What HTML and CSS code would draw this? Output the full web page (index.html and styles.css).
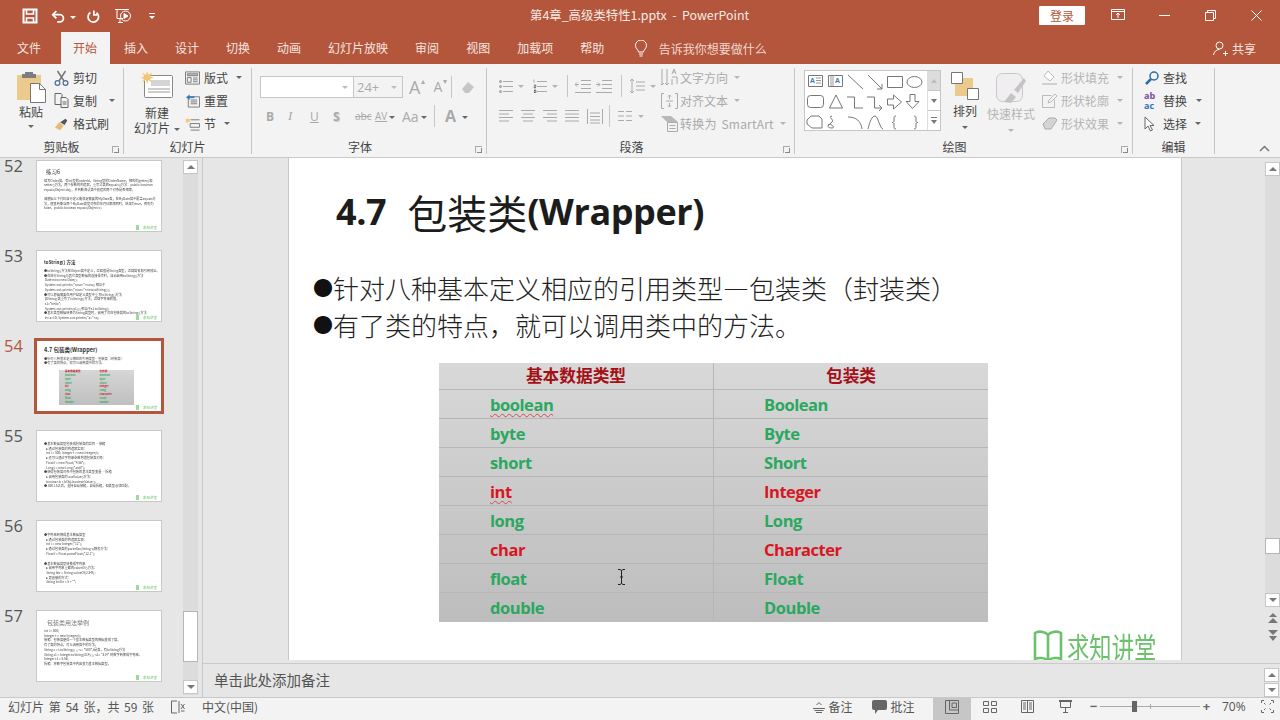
FILE: index.html
```html
<!DOCTYPE html>
<html lang="zh-CN">
<head>
<meta charset="utf-8">
<title>PowerPoint</title>
<link rel="stylesheet" href="styles.css">
</head>
<body>
<div class="app">
  <header class="titlebar">
    <div class="qat">
      <svg width="16" height="16" viewBox="0 0 16 16" fill="none" stroke="#fff" stroke-width="2"><path d="M1.500 1.500h13v13h-13z"/><path d="M4.500 2v4h7V2M4.500 14v-4h7v4" stroke-width="1.600"/></svg>
      <svg class="q-undo" width="16" height="15" viewBox="0 0 18 16" fill="none" stroke="#fff" stroke-width="2"><path d="M2 6h8a4 4 0 0 1 0 8H7"/><path d="M6 2L2 6l4 4"/></svg>
      <span class="caret white"></span>
      <svg class="q-redo" width="14" height="15" viewBox="0 0 16 16" fill="none" stroke="#fff" stroke-width="2"><path d="M5 3.400a6 6 0 1 0 7 .2"/><path d="M9 1v5H13"/></svg>
      <svg class="q-show" width="18" height="18" viewBox="0 0 18 18" fill="none" stroke="#fff" stroke-width="1"><path d="M1 2.500h14M3 2.500v9h6M6 11.500v4M4 15.500h5"/><circle cx="11.500" cy="9" r="5"/><path d="M10 6.500l4 2.500-4 2.500z" fill="#fff"/></svg>
      <span class="qat-more"></span>
    </div>
    <div class="doc-title">第4章_高级类特性1.pptx&nbsp; -&nbsp; PowerPoint</div>
    <div class="win">
      <button class="login">登录</button>
      <svg class="wi-ribbon" width="14" height="12" viewBox="0 0 14 12" fill="none" stroke="#fff"><path d="M.5.5h13v10H.5zM.5 2.500h13M7 9V4.500M5 6l2-2 2 2"/></svg>
      <svg class="wi-min" width="11" height="11" viewBox="0 0 11 11" stroke="#fff"><path d="M0 5.500h11"/></svg>
      <svg class="wi-max" width="11" height="11" viewBox="0 0 11 11" fill="none" stroke="#fff"><path d="M.5 2.500h8v8h-8zM2.500 2.500v-2h8v8h-2"/></svg>
      <svg class="wi-close" width="11" height="11" viewBox="0 0 11 11" stroke="#fff"><path d="M.5.5l10 10M10.500.5l-10 10"/></svg>
    </div>
  </header>

  <nav class="tabs">
    <span class="tab first">文件</span>
    <span class="tab active">开始</span>
    <span class="tab">插入</span>
    <span class="tab">设计</span>
    <span class="tab">切换</span>
    <span class="tab">动画</span>
    <span class="tab">幻灯片放映</span>
    <span class="tab">审阅</span>
    <span class="tab">视图</span>
    <span class="tab">加载项</span>
    <span class="tab">帮助</span>
    <span class="tell">
      <svg width="14" height="17" viewBox="0 0 14 17" fill="none" stroke="#fff"><path d="M4.500 12c0-2-3-3.500-3-6.500a5.500 5.500 0 0 1 11 0c0 3-3 4.500-3 6.500zM5 14h4M5.500 16h3"/></svg>
      <span>告诉我你想要做什么</span>
    </span>
    <span class="share">
      <svg width="15" height="15" viewBox="0 0 15 15" fill="none" stroke="#fff"><circle cx="6.500" cy="4.500" r="3.500"/><path d="M.5 14c.5-3.500 3-5.500 6-5.500M10 12.500h5M12.500 10v5"/></svg>
      <span>共享</span>
    </span>
  </nav>

  <section class="ribbon">
    <div class="group g-clip">
      <div class="group-body">
        <div class="big paste">
          <svg width="29" height="31" viewBox="0 0 29 31"><path d="M0 3h24v25H0z" fill="#ecca8c"/><path d="M8 0h8v2h3v4H5V2h3z" fill="#7d7d7d"/><path d="M13.500 11.500h9l6 6v13h-15z" fill="#fff" stroke="#777"/><path d="M22.500 11.500v6h6" fill="none" stroke="#777"/></svg>
          <span>粘贴</span>
          <span class="caret"></span>
        </div>
        <div class="col small-col">
          <div class="item"><svg width="14" height="16" viewBox="0 0 14 16" fill="none" stroke="#4a6f9c" stroke-width="1.200"><circle cx="3" cy="13" r="2.400"/><circle cx="11" cy="13" r="2.400"/><path d="M4.500 11L11 1M9.500 11L3 1" stroke="#777" stroke-width="1.500"/></svg><span>剪切</span></div>
          <div class="item"><svg width="14" height="15" viewBox="0 0 14 15" fill="none" stroke="#666"><path d="M.5.5h6l1 1v10h-7z"/><path d="M6.500 4.500h5l2 2v8h-7z" fill="#f3f3f3"/><path d="M8 9h4M8 11h4"/></svg><span>复制</span><span class="caret ml8"></span></div>
          <div class="item"><svg width="17" height="14" viewBox="0 0 17 14"><path d="M1 11l5-6 5 4-4 5z" fill="#e3bb76"/><path d="M7 5l6-4 2 2-3 5z" fill="#555"/></svg><span>格式刷</span></div>
        </div>
      </div>
      <div class="group-label">剪贴板</div>
      <span class="launcher"></span>
    </div>

    <div class="group g-slides">
      <div class="group-body">
        <div class="big newslide">
          <svg width="32" height="27" viewBox="0 0 32 27"><rect x="3.500" y="4.500" width="28" height="22" rx="1" fill="#fff" stroke="#888"/><path d="M10 9h19v6H10z" fill="#d4d4d4"/><path d="M7 18h22M7 21h22" stroke="#999"/><path d="M6 0l1.500 4L11 1.500 9 5.500l4 1-4 1.500 2 3.500L7.500 9 6 13 5 9l-4 2.500L3 8 0 6.500l3.500-1L1 1.500 5 4z" fill="#f2c674"/></svg>
          <span class="mt5">新建</span>
          <span class="line2">幻灯片<i class="caret ml4"></i></span>
        </div>
        <div class="col small-col s2">
          <div class="item"><svg width="16" height="14" viewBox="0 0 16 14" fill="none" stroke="#777"><path d="M.5.5h15v13H.5z"/><path d="M2.500 2.500h11v2h-11z" fill="#ccc"/><path d="M2.500 6.500h4v5h-4zM8.500 7h5M8.500 9h5M8.500 11h5"/></svg><span>版式</span><span class="caret ml4"></span></div>
          <div class="item"><svg width="16" height="15" viewBox="0 0 16 15" fill="none" stroke="#777"><path d="M3.500 3.500h12v11h-12z"/><path d="M6 7h7M6 9h7M6 11h7"/><path d="M1 4l4-3v6z" fill="#3d7fb8" stroke="none"/><path d="M4 4h6" stroke="#3d7fb8" stroke-width="2"/></svg><span>重置</span></div>
          <div class="item"><svg width="16" height="14" viewBox="0 0 16 14" fill="none" stroke="#777"><path d="M6 2.500h9.500M6 13.500h9.500M5.500 6.500h10v4h-10z"/><path d="M3 0l.7 2L6 1.500 4.500 3 6 5l-2.300-.5L3 7l-.7-2.500L0 5l1.500-2L0 1.500 2.300 2z" fill="#f2c674" stroke="none"/></svg><span>节</span><span class="caret ml4"></span></div>
        </div>
      </div>
      <div class="group-label">幻灯片</div>
    </div>

    <div class="group g-font dim">
      <div class="group-body column">
        <div class="row font-row1">
          <span class="fbox name"><i class="caret"></i></span>
          <span class="fbox size">24+<i class="caret"></i></span>
          <span class="f-a big-a">A<sup>▴</sup></span>
          <span class="f-a small-a">A<sup>▾</sup></span>
          <span class="vsep"></span>
          <svg class="eraser" width="14" height="14" viewBox="0 0 14 14"><path d="M1 9l6-7 6 5-5 6H4z" fill="#c6c6c6"/></svg>
        </div>
        <div class="row font-row2">
          <b>B</b><i class="it">I</i><u>U</u><b class="shadow">S</b><s>abc</s>
          <span class="av">AV<i class="caret ml2"></i></span>
          <span class="aa">Aa<i class="caret ml2"></i></span>
          <span class="vsep"></span>
          <b class="colora">A<i class="caret ml6"></i></b>
        </div>
      </div>
      <div class="group-label off">字体</div>
      <span class="launcher"></span>
    </div>

    <div class="group g-para dim">
      <div class="group-body">
        <div class="col para-left">
          <div class="row para-row1">
            <svg width="14" height="14" viewBox="0 0 14 14" stroke="#aaa"><path d="M4 2.500h10M4 7.500h10M4 12.500h10"/><circle cx="1.500" cy="2.500" r="1.500" fill="#aaa" stroke="none"/><circle cx="1.500" cy="7.500" r="1.500" fill="#aaa" stroke="none"/><circle cx="1.500" cy="12.500" r="1.500" fill="#aaa" stroke="none"/></svg><i class="caret lt"></i>
            <svg width="14" height="14" viewBox="0 0 14 14" stroke="#aaa"><path d="M4 2.500h10M4 7.500h10M4 12.500h10M1 0.500v3M1 6h2v1.500H1V9h2M1 11h2v3H1M1 12.500h2"/></svg><i class="caret lt"></i>
            <span class="vsep"></span>
            <svg class="ind" width="16" height="13" viewBox="0 0 16 13" stroke="#aaa" fill="none"><path d="M6 .5h10M6 4.500h10M6 8.500h10M0 12.500h16M4 4.500H0M2 2.500l-2 2 2 2"/></svg>
            <svg width="16" height="13" viewBox="0 0 16 13" stroke="#aaa" fill="none"><path d="M6 .5h10M6 4.500h10M6 8.500h10M0 12.500h16M0 4.500h4M2 2.500l2 2-2 2"/></svg>
            <span class="vsep sep2"></span>
            <svg class="ind" width="16" height="16" viewBox="0 0 16 16" stroke="#aaa" fill="none"><path d="M3 1v14M1 3l2-2 2 2M1 13l2 2 2-2M7 4h9M7 8h9M7 12h9"/></svg><i class="caret lt"></i>
          </div>
          <div class="row para-row2">
            <svg width="14" height="12" viewBox="0 0 14 12" stroke="#aaa"><path d="M0 .5h14M0 4h10M0 7.500h14M0 11h10"/></svg>
            <svg width="14" height="12" viewBox="0 0 14 12" stroke="#aaa"><path d="M0 .5h14M2 4h10M0 7.500h14M2 11h10"/></svg>
            <svg width="14" height="12" viewBox="0 0 14 12" stroke="#aaa"><path d="M0 .5h14M4 4h10M0 7.500h14M4 11h10"/></svg>
            <svg width="14" height="12" viewBox="0 0 14 12" stroke="#aaa"><path d="M0 .5h14M0 4h14M0 7.500h14M0 11h14"/></svg>
            <svg width="16" height="15" viewBox="0 0 16 15" stroke="#aaa" fill="none"><path d="M.5 0v15M15.500 0v15M3 4h10M3 7.500h10M3 11h10M3 14h10"/></svg>
            <span class="vsep"></span>
            <svg width="14" height="10" viewBox="0 0 14 10" stroke="#aaa"><path d="M0 .5h6M8 .5h6M0 5h6M8 5h6M0 9.500h6M8 9.500h6"/></svg><i class="caret lt"></i>
          </div>
        </div>
        <div class="col para-right">
          <div class="item"><svg width="17" height="17" viewBox="0 0 17 17" stroke="#aaa" fill="none"><path d="M1 0v16M-1 14l2 2 2-2M6 0v16M4 14l2 2 2-2M11 5l2-5 2 5M12 3h2M11 8h5v7M11 10v6"/></svg><span>文字方向</span><i class="caret lt ml4"></i></div>
          <div class="item"><svg width="17" height="16" viewBox="0 0 17 16" stroke="#aaa" fill="none"><path d="M3 .5H.5v15H3M14 .5h2.500v15H14M5 8h7M8.500 2v4M7 3.500l1.500-1.500L10 3.500M8.500 14v-4M7 12.500L8.500 14l1.500-1.500"/></svg><span>对齐文本</span><i class="caret lt ml4"></i></div>
          <div class="item"><svg width="17" height="16" viewBox="0 0 17 16" fill="none"><path d="M0 0h10l7 6H6z" fill="#b8b8b8"/><path d="M6.500 6.500h10v9h-10zM8.500 9.500h6M8.500 12.500h6" stroke="#aaa"/></svg><span class="smartart">转换为 SmartArt</span><i class="caret lt ml4"></i></div>
        </div>
      </div>
      <div class="group-label off">段落</div>
      <span class="launcher"></span>
    </div>

    <div class="group g-draw">
      <div class="group-body">
        <div class="gallery">
          <svg width="122" height="60" viewBox="0 0 122 60" fill="none" stroke="#777">
            <path d="M3.500 4.500h14v11h-14zM23.500 4.500h14v11h-14z"/><path d="M11 7h5M11 9.500h5M11 12h5M26 5v10M28 5v10" stroke="#999"/>
            <text class="ga" x="5" y="12">A</text><text class="ga" x="30" y="12">A</text>
            <path d="M43 4l15 14M63 4l14 14M77 13v5h-5"/>
            <path d="M82.500 5.500h15v11h-15z"/><ellipse cx="109.500" cy="11" rx="7.500" ry="5.500"/>
            <rect x="2.500" y="24.500" width="16" height="12" rx="3"/><path d="M31 24l-6.500 13h13zM42 26h7.500v11H58M62 26h7.500v11H77M74 34l3 3-3 3M82.500 28h6v-4l8 7-8 7v-4h-6zM105 23.500h5v7h4l-6.500 7-6.500-7h4z"/>
            <path d="M6 45h8l3 3v9H7l-5-4v-4zM27 45c-5 1 4 4-1 7s-3 5 1 5-1-5-4-3M43 46c8 0 13 4 14 12M63 58c2-8 4-13 7-13s5 13 8 13"/>
            <path d="M91 45c-2 0-2 1-2 3v2c0 1-1 1.500-2 1.500 1 0 2 .5 2 1.500v2c0 2 0 3 2 3M109 45c2 0 2 1 2 3v2c0 1 1 1.500 2 1.500-1 0-2 .5-2 1.500v2c0 2 0 3-2 3"/>
          </svg>
          <div class="gal-scroll">
            <span class="gs top"><i class="up lt"></i></span>
            <span class="gs"><i class="down"></i></span>
            <span class="gs more"><i class="bar"></i><i class="down"></i></span>
          </div>
        </div>
        <div class="big arrange">
          <svg width="28" height="28" viewBox="0 0 28 28"><path d="M4 6h18v18H4z" fill="#ecca8c"/><path d="M.5.5h11v11H.5zM16.500 16.500h11v11h-11z" fill="#fff" stroke="#777"/></svg>
          <span class="mt3">排列</span>
          <span class="caret"></span>
        </div>
        <div class="big quick dim-t">
          <svg width="30" height="30" viewBox="0 0 30 30" fill="none"><rect x=".5" y=".5" width="26" height="28" rx="6" fill="#f1eef2" stroke="#c8c8c8"/><path d="M8 29l7-9 5 4-5 6zM18 17l10-12 2 3-8 12z" fill="#c4c4c4"/></svg>
          <span class="mt3">快速样式</span>
          <span class="caret lt"></span>
        </div>
        <div class="col shape-col dim-t">
          <div class="item"><svg width="15" height="15" viewBox="0 0 15 15"><path d="M6 1l6 6-4 4-6-5z" fill="#fff" stroke="#bbb"/><path d="M0 13h15v2H0z" fill="#d0d0d0"/></svg><span>形状填充</span><i class="caret lt ml4"></i></div>
          <div class="item"><svg width="15" height="15" viewBox="0 0 15 15" fill="none" stroke="#bbb"><path d="M.5 2.500h9M.5 2.500v12h12v-8M6 10l1-3 6-6 2 2-6 6z"/></svg><span>形状轮廓</span><i class="caret lt ml4"></i></div>
          <div class="item"><svg width="15" height="13" viewBox="0 0 15 13"><path d="M1 7l6-6h6l2 2-6 9H3z" fill="#d4d4d4" stroke="#aaa"/></svg><span>形状效果</span><i class="caret lt ml4"></i></div>
        </div>
      </div>
      <div class="group-label off">绘图</div>
      <span class="launcher"></span>
    </div>

    <div class="group g-edit">
      <div class="group-body">
        <div class="col edit-col">
          <div class="item"><svg class="find" width="14" height="14" viewBox="0 0 14 14" fill="none" stroke="#2d6da8"><circle cx="9" cy="5" r="4" stroke-width="1.500"/><path d="M6 8l-5 5" stroke-width="2.500"/></svg><span>查找</span></div>
          <div class="item rep"><span class="abac"><em>ab</em><em class="ac">ac</em></span><span>替换</span><span class="caret ml5"></span></div>
          <div class="item sel"><svg width="11" height="16" viewBox="0 0 11 16" fill="#fff" stroke="#666"><path d="M1 1v12l3-3 2.500 5 2-1-2.500-4.500h4z"/></svg><span>选择</span><span class="caret ml4"></span></div>
        </div>
      </div>
      <div class="group-label">编辑</div>
    </div>
    <svg class="collapse" width="11" height="7" viewBox="0 0 11 7" fill="none" stroke="#777" stroke-width="1.500"><path d="M1 6l4.500-4.500L10 6"/></svg>
  </section>

  <main class="workspace">
    <aside class="thumbs">
      <div class="thumb-list">
        <div class="thumb"><span class="num">52</span>
          <div class="card"><h4>练习6</h4><p>编写Order类，有int型的orderId，String型的OrderName，相应的getter()和setter()方法，两个参数的构造器，重写父类的equals()方法：public boolean equals(Object obj)，并判断测试类中创建的两个对象是否相等。</p><p class="gap">请根据以下代码自行定义能满足需要的MyDate类，在MyDate类中覆盖equals方法，使其判断当两个MyDate类型对象的年月日都相同时，结果为true，否则为false。public boolean equals(Object o)</p><span class="mini-logo">求知讲堂</span></div></div>
        <div class="thumb"><span class="num">53</span>
          <div class="card dense"><h4 class="small-h">toString() 方法</h4><p>●toString()方法在Object类中定义，返回值是String类型，返回类名和引用地址。</p><p>●在进行String与其它类型数据的连接操作时，自动调用toString()方法</p><p>&nbsp;Date now=new Date();</p><p>&nbsp;System.out.println("now="+now); 相当于</p><p>&nbsp;System.out.println("now="+now.toString());</p><p>●可以根据需要在用户自定义类型中重写toString()方法</p><p>&nbsp;如String 类重写了toString()方法，返回字符串的值。</p><p>&nbsp;s1="hello";</p><p>&nbsp;System.out.println(s1);//相当于s1.toString()</p><p>●基本类型数据转换为String类型时，调用了对应包装类的toString()方法</p><p>&nbsp;int a=10; System.out.println("a="+a);</p><span class="mini-logo">求知讲堂</span></div></div>
        <div class="thumb current"><span class="num">54</span>
          <div class="card"><h4 class="h54">4.7 包装类(Wrapper)</h4><p>●针对八种基本定义相应的引用类型—包装类（封装类）</p><p>●有了类的特点，就可以调用类中的方法。</p><div class="mini-table"><span class="mr">基本数据类型</span><span class="mr">包装类</span><span class="mg">boolean</span><span class="mg">Boolean</span><span class="mg">byte</span><span class="mg">Byte</span><span class="mg">short</span><span class="mg">Short</span><span class="mr">int</span><span class="mr">Integer</span><span class="mg">long</span><span class="mg">Long</span><span class="mr">char</span><span class="mr">Character</span><span class="mg">float</span><span class="mg">Float</span><span class="mg">double</span><span class="mg">Double</span></div><span class="mini-logo">求知讲堂</span></div></div>
        <div class="thumb"><span class="num">55</span>
          <div class="card dense pt"><p>●基本数据类型包装成包装类的实例 —装箱</p><p>&nbsp;&nbsp;►通过包装类的构造器实现：</p><p>&nbsp;&nbsp;&nbsp;int i = 500; Integer t = new Integer(i);</p><p>&nbsp;&nbsp;►还可以通过字符串参数构造包装类对象：</p><p>&nbsp;&nbsp;&nbsp;Float f = new Float("4.56");</p><p>&nbsp;&nbsp;&nbsp;Long l = new Long("asdf");</p><p>●获得包装类对象中包装的基本类型变量 —拆箱</p><p>&nbsp;&nbsp;►调用包装类的.xxxValue()方法：</p><p>&nbsp;&nbsp;&nbsp;boolean b = bObj.booleanValue();</p><p>●JDK1.5之后，支持自动装箱，自动拆箱，但类型必须匹配。</p><span class="mini-logo">求知讲堂</span></div></div>
        <div class="thumb"><span class="num">56</span>
          <div class="card dense pt2"><p>●字符串转换成基本数据类型</p><p>&nbsp;&nbsp;►通过包装类的构造器实现：</p><p>&nbsp;&nbsp;&nbsp;int i = new Integer("12");</p><p>&nbsp;&nbsp;►通过包装类的parseXxx(String s)静态方法：</p><p>&nbsp;&nbsp;&nbsp;Float f = Float.parseFloat("12.1");</p><p class="gap">●基本数据类型转换成字符串</p><p>&nbsp;&nbsp;►调用字符串重载的valueOf()方法：</p><p>&nbsp;&nbsp;&nbsp;String fstr = String.valueOf(2.34f);</p><p>&nbsp;&nbsp;►更直接的方式：</p><p>&nbsp;&nbsp;&nbsp;String intStr = 5 + "";</p><span class="mini-logo">求知讲堂</span></div></div>
        <div class="thumb"><span class="num">57</span>
          <div class="card dense"><h4 class="grey-h">包装类用法举例</h4><p>int i = 500;</p><p>Integer t = new Integer(i);</p><p>装箱：包装类使得一个基本数据类型的数据变成了类。</p><p>有了类的特点，可以调用类中的方法。</p><p>String s = t.toString(); // s = "500",t是类，有toString方法</p><p>String s1 = Integer.toString(314); // s1= "314" 将数字转换成字符串。</p><p>Integer t1 = 5.56;</p><p>拆箱：将数字包装类中内容变为基本数据类型。</p><span class="mini-logo">求知讲堂</span></div></div>
      </div>
      <div class="vscroll vs-thumbs">
        <span class="sb-btn"><i class="up"></i></span>
        <span class="sb-thumb"></span>
        <span class="sb-btn"><i class="down"></i></span>
      </div>
    </aside>

    <div class="editor">
      <div class="stage">
        <div class="slide">
          <h1 class="slide-title"><span>4.7</span><span class="cjk-t">包装类</span><span>(Wrapper)</span></h1>
          <div class="bullets">
            <p><span class="dot">●</span>针对八种基本定义相应的引用类型—包装类（封装类）</p>
            <p><span class="dot">●</span>有了类的特点，就可以调用类中的方法。</p>
          </div>
          <div class="dtable">
            <div class="dr head"><span>基本数据类型</span><span>包装类</span></div>
            <div class="dr"><span class="g wavy">boolean</span><span class="g">Boolean</span></div>
            <div class="dr"><span class="g">byte</span><span class="g">Byte</span></div>
            <div class="dr"><span class="g">short</span><span class="g">Short</span></div>
            <div class="dr"><span class="r wavy">int</span><span class="r">Integer</span></div>
            <div class="dr"><span class="g">long</span><span class="g">Long</span></div>
            <div class="dr"><span class="r">char</span><span class="r">Character</span></div>
            <div class="dr"><span class="g">float</span><span class="g">Float</span></div>
            <div class="dr"><span class="g">double</span><span class="g">Double</span></div>
          </div>
          <div class="brand">
            <svg width="30" height="32" viewBox="0 0 30 32" fill="none" stroke="#6cc26c" stroke-width="2.600"><path d="M15 5C12 1 5 1 2 3v26c3-1.500 10-1.500 13 1.500C18 27.500 25 27.500 28 29V3C25 1 18 1 15 5zM15 5v25"/></svg>
            <span>求知讲堂</span>
          </div>
          <svg class="ibeam" width="9" height="16" viewBox="0 0 9 16" fill="none" stroke="#222"><path d="M1 .5h2l1.500 1 1.500-1h2M4.500 1.500v13M1 15.500h2l1.500-1 1.500 1h2M3 8h3"/></svg>
        </div>
        <div class="vscroll vs-main">
          <span class="sb-btn"><i class="up"></i></span>
          <span class="sb-thumb"></span>
          <span class="sb-btn"><i class="down"></i></span>
          <div class="pager">
            <svg width="10" height="11" viewBox="0 0 10 11" fill="#777"><path d="M5 0l4 4H1zM5 5l5 5H0z"/></svg>
            <svg width="10" height="11" viewBox="0 0 10 11" fill="#777"><path d="M0 0h10L5 5zM1 6h8l-4 5z"/></svg>
          </div>
        </div>
      </div>
      <div class="notes">
        <span class="notes-text">单击此处添加备注</span>
        <div class="notes-scroll">
          <span class="sb-btn"><i class="up"></i></span>
          <span class="sb-btn"><i class="down"></i></span>
        </div>
      </div>
    </div>
  </main>

  <footer class="status">
    <span class="st-count">幻灯片 第 54 张，共 59 张</span>
    <svg class="st-book" width="14" height="14" viewBox="0 0 14 14" fill="none" stroke="#666"><path d="M6 1H.5v12H6M8 1v12M10 4l3.500 5M13.500 4L10 9M10 11h3.500"/></svg>
    <span class="st-lang">中文(中国)</span>
    <div class="st-right">
      <span class="st-btn notes-b"><svg width="12" height="12" viewBox="0 0 12 12" stroke="#666" fill="none"><path d="M0 7.500h12M1.500 9.500h9M3 11.500h6M3.500 4l2.500-2.500L8.500 4"/></svg>备注</span>
      <span class="st-btn comm-b"><svg width="15" height="14" viewBox="0 0 15 14" fill="#666"><path d="M2 0h11a2 2 0 0 1 2 2v6a2 2 0 0 1-2 2H6l-3 4v-4H2a2 2 0 0 1-2-2V2a2 2 0 0 1 2-2z"/></svg>批注</span>
      <span class="view active-view"><svg width="14" height="14" viewBox="0 0 14 14" fill="none" stroke="#666"><path d="M.5.5h13v13H.5zM4.500.5v9.500h9M7 3h4.500v4.500H7z"/></svg></span>
      <span class="view"><svg width="14" height="12" viewBox="0 0 14 12" fill="none" stroke="#666"><path d="M.5.5h5v4h-5zM8.500.5h5v4h-5zM.5 7.500h5v4h-5zM8.500 7.500h5v4h-5z"/></svg></span>
      <span class="view"><svg width="13" height="13" viewBox="0 0 13 13" fill="none" stroke="#666"><path d="M.5.5h12v12H.5zM6.500.5v12M2 3h3M2 5h3M2 7h3M2 9h3M8 3h3M8 5h3M8 7h3M8 9h3"/></svg></span>
      <span class="view"><svg width="13" height="13" viewBox="0 0 13 13" fill="none" stroke="#666"><path d="M0 1h13" stroke-width="2"/><path d="M1.500 1.500v6h10v-6M6.500 7.500v5M4 12.500h5"/></svg></span>
      <div class="zoom">
        <span class="z-btn">−</span>
        <div class="z-track"><span class="z-mark"></span><span class="z-knob"></span></div>
        <span class="z-btn">+</span>
      </div>
      <span class="z-val">70%</span>
      <svg class="fit" width="13" height="13" viewBox="0 0 13 13" fill="none" stroke="#666"><path d="M.5 3V.5H3M10 .5h2.500V3M.5 10v2.500H3M10 12.500h2.500V10M3 3l1.500 1.500M10 3L8.500 4.500M3 10l1.500-1.500M10 10L8.500 8.500"/></svg>
    </div>
  </footer>
</div>
</body>
</html>
```
FILE: styles.css
```css
* { box-sizing: border-box; }
html, body { margin: 0; padding: 0; }
body { font-family: "Noto Sans CJK SC", "Open Sans", sans-serif; font-size: 12px; color: #444; }
.app { width: 1280px; height: 720px; overflow: hidden; display: flex; flex-direction: column; background: #e6e6e6; }
i, em { font-style: normal; }

.caret { display: inline-block; width: 0; height: 0; border-left: 3px solid transparent; border-right: 3px solid transparent; border-top: 3px solid #666; vertical-align: middle; }
.caret.white { border-top-color: #fff; margin: 2px 0 0 3px; }
.caret.lt { border-top-color: #b5b5b5; }
.ml2 { margin-left: 2px; } .ml4 { margin-left: 4px; } .ml5 { margin-left: 5px; } .ml6 { margin-left: 6px; } .ml8 { margin-left: 8px; }
.mt3 { margin-top: 3px; } .mt5 { margin-top: 5px; }

/* Title bar */
.titlebar { height: 32px; flex: none; background: #b3563c; display: flex; align-items: center; color: #f8eae5; }
.qat { width: 530px; flex: none; display: flex; align-items: center; padding-left: 22px; }
.q-undo { margin-left: 13px; }
.q-redo { margin-left: 10px; }
.q-show { margin-left: 14px; }
.qat-more { width: 6px; height: 6px; margin-left: 17px; border-top: 1px solid #fff; position: relative; }
.qat-more::after { content: ""; position: absolute; left: 0; top: 2px; border-left: 3px solid transparent; border-right: 3px solid transparent; border-top: 3px solid #fff; }
.doc-title { font-size: 12.400px; width: 232px; white-space: nowrap; margin-bottom: 3px; }
.win { margin-left: auto; display: flex; align-items: center; height: 30px; margin-bottom: 2px; }
.login { width: 46px; height: 19px; background: #fff; border: 0; padding: 0; border-radius: 1px; color: #b3563c; font: 12px/19px "Noto Sans CJK SC", sans-serif; margin-right: 26px; }
.wi-ribbon { margin-right: 34px; }
.wi-min { margin-right: 35px; }
.wi-max { margin-right: 35px; }
.wi-close { margin-right: 18px; }

/* Tabs */
.tabs { height: 32px; flex: none; background: #b3563c; display: flex; align-items: stretch; padding-left: 4.500px; gap: 2px; color: #f6e6e0; }
.tab { padding: 0 12.500px; line-height: 31px; white-space: nowrap; }
.tab.first { margin-right: 5px; }
.tab.active { background: #f3f3f3; color: #b3563c; }
.tell { display: flex; align-items: center; gap: 11px; margin-left: 15px; color: #f0d8d0; }
.share { margin-left: auto; margin-right: 24px; display: flex; align-items: center; gap: 4px; }

/* Ribbon */
.ribbon { height: 94px; flex: none; background: #f3f3f3; border-bottom: 1px solid #c9c9c9; display: flex; padding-top: 4px; position: relative; }
.group { position: relative; height: 86px; border-right: 1px solid #c6c6c6; flex: none; display: flex; flex-direction: column; }
.g-clip { width: 124px; } .g-slides { width: 128px; } .g-font { width: 235px; } .g-para { width: 308px; } .g-draw { width: 338px; } .g-edit { width: 82px; }
.group-body { height: 72px; margin-top: -2px; display: flex; flex: none; }
.group-body.column { flex-direction: column; }
.group-label { text-align: center; line-height: 18px; color: #444; }
.group-label.off { padding-right: 18px; }
.launcher { position: absolute; right: 4px; bottom: 1px; width: 7px; height: 7px; border-left: 1px solid #aaa; border-top: 1px solid #aaa; }
.launcher::after { content: ""; position: absolute; right: 0; bottom: 0; width: 4px; height: 4px; border-right: 1px solid #888; border-bottom: 1px solid #888; }
.big { display: flex; flex-direction: column; align-items: center; line-height: 15px; flex: none; }
.col { display: flex; flex-direction: column; flex: none; }
.row { display: flex; align-items: center; }
.item { height: 23px; display: flex; align-items: center; gap: 4px; white-space: nowrap; }
.paste { width: 30px; margin: 6px 0 0 16px; }
.paste span:nth-of-type(1) { margin-top: 1px; }
.paste .caret { margin-top: 6px; }
.small-col { margin: 0 0 0 8px; }
.small-col svg { flex: none; width: 15px; }
.g-slides .big { width: 60px; margin: 5px 0 0 3px; }
.g-slides .mt5 { margin-top: 7px; }
.line2 { white-space: nowrap; }
.small-col.s2 { margin-left: -2px; }

/* Font group */
.dim { color: #b0b0b0; }
.font-row1 { height: 22px; margin: 10px 0 0 8px; }
.fbox { height: 22px; border: 1px solid #c6c6c6; background: #fff; display: flex; align-items: center; justify-content: flex-end; padding-right: 5px; font: 13px "Open Sans", sans-serif; color: #aaa; }
.fbox .caret { border-top-color: #bbb; }
.fbox.name { width: 94px; }
.fbox.size { width: 50px; margin-left: -1px; justify-content: space-between; padding-left: 3px; background: #f3f3f3; }
.f-a { font: 17px "Open Sans", sans-serif; color: #aaa; position: relative; line-height: 22px; }
.f-a sup { font-size: 8px; position: absolute; top: -6px; right: -5px; }
.big-a { margin-left: 6px; font-size: 18px; }
.small-a { margin-left: 13px; font-size: 14px; }
.vsep { width: 1px; height: 22px; background: #c6c6c6; flex: none; }
.font-row1 .vsep { margin-left: 9px; }
.eraser { margin-left: 9px; }
.font-row2 { margin: 7px 0 0 14px; font: 12px "Open Sans", sans-serif; color: #aaa; height: 22px; }
.font-row2 b { width: 22px; }
.font-row2 .it { width: 22px; font-family: "Liberation Serif", serif; font-style: italic; font-size: 13px; }
.font-row2 u { width: 23px; }
.shadow { text-shadow: 1px 1px 1px #ccc; }
.font-row2 s { width: 20px; font-size: 10px; }
.av { font-size: 10px; width: 26px; text-decoration: underline; white-space: nowrap; }
.aa { font-size: 14px; width: 32px; margin-left: 1px; white-space: nowrap; }
.colora { font-size: 16px; margin-left: 10px; white-space: nowrap; width: auto !important; }

/* Paragraph */
.para-left { width: 174px; padding: 9px 0 0 12px; }
.para-row1 { height: 22px; gap: 5px; }
.para-row1 .caret { margin-right: 4px; }
.para-row1 .ind { margin-left: 2px; }
.para-row1 .sep2 { margin-left: 4px; }
.para-row2 { height: 22px; margin-top: 8px; gap: 8px; }
.para-row2 .vsep { margin-left: -2px; }
.para-row2 i { margin-left: -2px; }
.para-right .item { gap: 2px; color: #aaa; }
.smartart { word-spacing: 2px; letter-spacing: .2px; }

/* Draw */
.gallery { width: 137px; height: 61px; margin: 4px 0 0 9px; border: 1px solid #c6c6c6; background: #fff; display: flex; flex: none; }
.gallery svg { flex: none; }
.ga { font: bold 7px "Open Sans", sans-serif; fill: #3f7db0; stroke: none; }
.gal-scroll { width: 13px; flex: 1; display: flex; flex-direction: column; border-left: 1px solid #ddd; }
.gs { flex: 1; display: flex; flex-direction: column; align-items: center; justify-content: center; gap: 2px; border-bottom: 1px solid #c6c6c6; }
.gs:last-child { border-bottom: 0; }
.gs.top { background: #dcdcdc; }
.up, .down { display: block; width: 0; height: 0; border-left: 4px solid transparent; border-right: 4px solid transparent; }
.up { border-bottom: 4px solid #777; }
.down { border-top: 4px solid #777; }
.up.lt { border-bottom-color: #bdbdbd; }
.gal-scroll .up, .gal-scroll .down { border-left-width: 3px; border-right-width: 3px; }
.bar { width: 6px; height: 1px; background: #777; }
.arrange { width: 40px; margin: 6px 0 0 4px; }
.arrange .caret { margin-top: 8px; }
.quick { width: 48px; margin: 7px 0 0 2px; white-space: nowrap; }
.quick .caret { margin-top: 8px; }
.shape-col { margin-left: 7px; }
.dim-t { color: #b5b5b5; }

/* Edit */
.edit-col { padding-left: 8px; }
.find { margin-left: 4px; }
.abac { width: 18px; padding-left: 3px; display: flex; flex-direction: column; font: bold 9px/10px "Open Sans", sans-serif; color: #7b4a9c; }
.abac .ac { color: #3a76ad; }
.sel svg { margin: 0 4px 0 3px; }
.collapse { position: absolute; right: 10px; bottom: 5px; }

/* Workspace */
.workspace { height: 539px; flex: none; display: flex; background: #e6e6e6; }
.thumbs { width: 203px; flex: none; border-right: 1px solid #c9c9c9; display: flex; position: relative; }
.thumb-list { width: 183px; height: 537px; flex: none; padding-top: 2px; display: flex; flex-direction: column; }
.thumb { height: 90px; flex: none; display: flex; }
.num { width: 36px; padding-left: 4px; font: 16.500px/1 "Open Sans", sans-serif; color: #555; flex: none; margin-top: -2px; }
.current .num { color: #b3563c; }
.card { width: 126px; height: 72px; flex: none; background: #fff; border: 1px solid #c8c8c8; position: relative; overflow: hidden; padding: 6px 5px 0 7px; font-size: 3.200px; line-height: 4.400px; color: #444; filter: blur(.25px); }
.current .card { outline: 3px solid #b3563c; outline-offset: -1px; border-color: #fff; filter: none; }
.card h4 { margin: 2px 0 3px 2px; font-size: 5.500px; line-height: 7px; font-weight: 400; color: #333; }
.card .small-h { font-weight: 700; font-size: 4.500px; margin-left: 0; }
.card .h54 { margin: 0 0 3px 0; font-weight: 700; }
.card .grey-h { color: #777; margin-left: 3px; font-size: 6px; }
.card p { margin: 0; }
.card p.gap { margin-top: 5px; }
.pt { padding-top: 11px; }
.pt2 { padding-top: 12px; }
.dense p { line-height: 4.700px; white-space: nowrap; }
.mini-logo { position: absolute; right: 4px; bottom: 1px; font-size: 3.500px; line-height: 5px; color: #6cc26c; padding-left: 4px; border-left: 3px solid #9ddb9d; }
.mini-table { margin: 4px 0 0 15px; width: 75px; height: 35px; background: linear-gradient(#d6d6d6, #bfbfbf); display: grid; grid-template-columns: 1fr 1fr; font-size: 2.600px; line-height: 3.900px; padding-left: 6px; font-weight: 700; }
.mr { color: #c4141c; }
.mg { color: #2aa860; }

/* Scroll bars */
.vscroll { width: 15px; flex: none; background: #dcdcdc; display: flex; flex-direction: column; align-items: stretch; position: relative; }
.vs-thumbs { margin: 2px 0; }
.sb-btn { height: 14px; flex: none; background: #fff; border: 1px solid #c6c6c6; display: flex; align-items: center; justify-content: center; }
.sb-thumb { background: #fff; border: 1px solid #b5b5b5; flex: none; }
.vs-thumbs .sb-thumb { height: 51px; margin-top: 437px; }
.vs-thumbs .sb-btn:last-child { margin-top: 18px; }

/* Editor */
.editor { flex: 1; min-width: 0; display: flex; flex-direction: column; }
.stage { height: 502px; flex: none; display: flex; background: #e6e6e6; overflow: hidden; }
.slide { width: 894px; margin-left: 85px; height: 502px; flex: none; background: #fff; border-left: 1px solid #c9c9c9; border-right: 1px solid #c9c9c9; overflow: hidden; position: relative; }
.slide-title { margin: 0; height: 70px; padding: 30px 0 0 47px; font: 700 36px/48px "Open Sans", "Noto Sans CJK SC", sans-serif; color: #1c1c1c; display: flex; white-space: nowrap; letter-spacing: -.4px; }
.cjk-t { font: 400 40px/48px "Noto Sans CJK SC", sans-serif; margin-left: 21px; letter-spacing: 0; }
.bullets { margin: 41px 0 0 24px; font-size: 26px; line-height: 37px; color: #222; font-weight: 300; white-space: nowrap; }
.bullets p { margin: 0; height: 37px; }
.dot { display: inline-block; width: 20px; font-size: 20px; line-height: 37px; vertical-align: top; font-weight: 400; color: #111; }
.dtable { margin: 20px 0 0 150px; width: 549px; height: 259px; background: linear-gradient(#d8d8d8, #bdbdbd); display: flex; flex-direction: column; }
.dr { height: 29px; flex: none; display: grid; grid-template-columns: 275px 274px; grid-template-rows: 28px; border-bottom: 1px solid #b6b6b6; font: 700 16.500px/30px "Open Sans", sans-serif; }
.dr:last-child { border-bottom: 0; }
.dr span { height: 28px; padding-left: 51px; border-right: 1px solid #b6b6b6; letter-spacing: -.45px; }
.dr span:last-child { padding-left: 50px; border-right: 0; }
.dr.head { height: 27px; grid-template-rows: 26px; font: 700 16.700px/25px "Noto Sans CJK SC", sans-serif; color: #a50f16; }
.dr.head span { height: 26px; padding: 0; text-align: center; letter-spacing: 0; }
.g { color: #2aa860; }
.r { color: #d8161f; }
.dr .wavy { text-decoration: underline wavy #c9504f 1px; text-underline-offset: 2px; text-decoration-skip-ink: none; }
.brand { position: absolute; left: 744px; top: 472px; display: flex; gap: 4px; color: #6cc26c; font-size: 29px; line-height: 33px; white-space: nowrap; }
.brand span { display: block; transform: scaleX(.77); transform-origin: left center; }
.ibeam { position: absolute; left: 328px; top: 411px; }
.vs-main { width: 17px; margin-left: 82px; padding: 4px 1px 0; background: linear-gradient(#dcdcdc, #dcdcdc) no-repeat 1px 4px / 15px 445px; }
.vs-main .sb-thumb { height: 16px; margin-top: 362px; }
.vs-main .sb-btn:nth-child(3) { margin-top: 39px; }
.pager { display: flex; flex-direction: column; align-items: center; gap: 6px; margin-top: 6px; }

/* Notes */
.notes { flex: 1; border-top: 1px solid #c9c9c9; margin-top: 3px; display: flex; align-items: flex-start; padding-left: 11px; }
.notes-text { font-size: 14.500px; line-height: 20px; color: #555; margin-top: 6px; }
.notes-scroll { margin: 4px 0 0 auto; width: 17px; padding: 0 1px; display: flex; flex-direction: column; gap: 1px; }

/* Status */
.status { height: 23px; flex: none; background: #f3f3f3; border-top: 1px solid #c9c9c9; display: flex; align-items: center; padding-left: 8px; color: #555; }
.st-count { width: 163px; flex: none; white-space: nowrap; word-spacing: 2px; margin-bottom: 5px; }
.st-book { margin-bottom: 5px; }
.st-lang { margin: 0 0 5px 17px; white-space: nowrap; }
.st-right { margin-left: auto; display: flex; align-items: center; height: 22px; }
.st-right > * { margin-bottom: 5px; }
.st-btn { display: flex; align-items: center; gap: 3px; white-space: nowrap; }
.notes-b { margin-right: 20px; }
.comm-b { margin-right: 18px; }
.st-right > .view { width: 38px; height: 22px; margin: 0; padding-bottom: 5px; display: flex; align-items: center; justify-content: center; flex: none; }
.st-right > .active-view { background: #c6c6c6; }
.zoom { display: flex; align-items: center; margin-left: 4.500px; gap: 2px; }
.z-btn { font: 700 13px/1 "Open Sans", sans-serif; width: 9px; text-align: center; color: #666; }
.z-track { width: 100px; height: 1px; background: #aaa; position: relative; }
.z-mark { position: absolute; left: 50px; top: -2px; width: 1px; height: 5px; background: #aaa; }
.z-knob { position: absolute; left: 32px; top: -5px; width: 5px; height: 11px; background: #666; }
.z-val { font: 12px "Open Sans", sans-serif; margin-left: 11px; width: 34px; }
.fit { margin-left: 5px; margin-right: 6px; }
```
